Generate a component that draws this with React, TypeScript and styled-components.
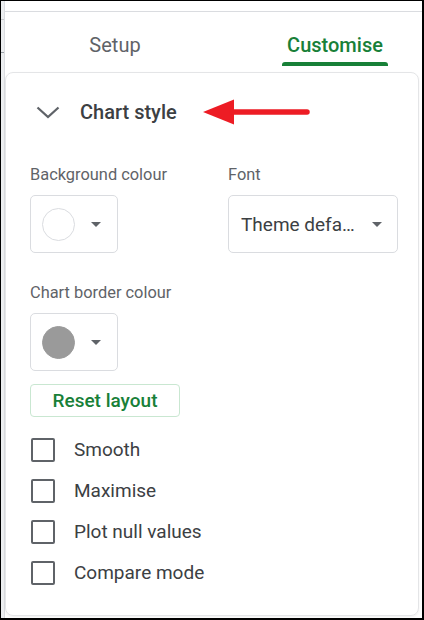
import styled, { createGlobalStyle } from "styled-components"

const GlobalStyle = createGlobalStyle`
    html, body {
        margin: 0;
        padding: 0;
        background: #ffffff;
    }
    body {
        font-family: Roboto, "Noto Sans", Arial, sans-serif;
    }
    * {
        box-sizing: border-box;
    }
`

const Frame = styled.div`
    width: 424px;
    height: 620px;
    display: flex;
    background: #ffffff;
    border-style: solid;
    border-color: #000000;
    border-width: 1px 2px 2px 1px;
    overflow: hidden;
`

const SheetEdge = styled.div`
    width: 4px;
    flex: none;
    background:
        linear-gradient(#c8cacd, #c8cacd) 0 18px / 100% 1px no-repeat,
        linear-gradient(#9aa0a6, #9aa0a6) 0 51px / 100% 1px no-repeat,
        #eceef0;
    border-right: 1px solid #dadce0;
`

const Main = styled.div`
    flex: 1;
    display: flex;
    flex-direction: column;
    min-width: 0;
`

const TopRule = styled.div`
    height: 11px;
    flex: none;
    border-bottom: 1px solid #dadce0;
`

const TabBar = styled.div`
    height: 54px;
    flex: none;
    display: flex;
    justify-content: space-between;
    padding: 0 34px 0 57px;
`

const Tab = styled.div<{ $active?: boolean }>`
    width: 106px;
    display: flex;
    flex-direction: column;
    align-items: center;
    justify-content: flex-end;
    font-size: 20px;
    line-height: 22px;
    font-weight: ${p => (p.$active ? 500 : 400)};
    color: ${p => (p.$active ? "#188038" : "#5f6368")};

    &::after {
        content: "";
        display: block;
        width: 100%;
        height: 4px;
        margin-top: 6px;
        border-radius: 3px 3px 0 0;
        background: ${p => (p.$active ? "#188038" : "transparent")};
    }
`

const Card = styled.div`
    flex: 1;
    margin: 6px 3px 2px 0;
    border: 1px solid #e4e5e7;
    border-radius: 8px;
    box-shadow: 0 1px 2px rgba(60, 64, 67, 0.08);
    padding: 15px 20px 0 24px;
    display: flex;
    flex-direction: column;
`

const Header = styled.div`
    height: 48px;
    display: flex;
    align-items: center;
    padding-left: 6px;
`

const Chevron = styled.svg`
    width: 24px;
    height: 24px;
    flex: none;
`

const HeaderTitle = styled.span`
    margin-left: 20px;
    font-size: 20px;
    font-weight: 500;
    color: #3c4043;
`

const Annotation = styled.svg`
    margin-left: 26px;
    width: 108px;
    height: 28px;
    flex: none;
`

const FieldGrid = styled.div`
    margin-top: 29px;
    display: grid;
    grid-template-columns: 198px 170px;
`

const Field = styled.div`
    display: flex;
    flex-direction: column;
    align-items: flex-start;
`

const Label = styled.div`
    font-size: 16.4px;
    line-height: 20px;
    color: #5f6368;
    margin-bottom: 10px;
`

const ColourButton = styled.div`
    width: 88px;
    height: 58px;
    border: 1px solid #dadce0;
    border-radius: 5px;
    display: flex;
    align-items: center;
    padding-left: 11px;
`

const Swatch = styled.div<{ $fill: string; $edge: string }>`
    width: 33px;
    height: 33px;
    border-radius: 50%;
    background: ${p => p.$fill};
    border: 1px solid ${p => p.$edge};
`

const Caret = styled.span<{ $gap: number }>`
    margin-left: ${p => p.$gap}px;
    width: 0;
    height: 0;
    border-left: 5px solid transparent;
    border-right: 5px solid transparent;
    border-top: 5px solid #5f6368;
`

const Select = styled.div`
    width: 170px;
    height: 58px;
    border: 1px solid #dadce0;
    border-radius: 5px;
    display: flex;
    align-items: center;
    justify-content: space-between;
    padding: 0 15px 0 12px;
    font-size: 19px;
    color: #3c4043;
`

const Section = styled.div`
    margin-top: 30px;
`

const ResetButton = styled.div`
    margin-top: 13px;
    width: 150px;
    height: 33px;
    border: 1px solid #c9e7d1;
    border-radius: 4px;
    display: flex;
    align-items: center;
    justify-content: center;
    font-size: 19px;
    font-weight: 500;
    color: #188038;
`

const CheckList = styled.div`
    margin-top: 12px;
    display: flex;
    flex-direction: column;
`

const CheckRow = styled.div`
    height: 41px;
    display: flex;
    align-items: center;
`

const CheckBox = styled.span`
    width: 24px;
    height: 24px;
    margin-left: 1px;
    border: 2px solid #5f6368;
    border-radius: 2px;
    flex: none;
`

const CheckLabel = styled.span`
    margin-left: 19px;
    font-size: 19px;
    color: #3c4043;
`

const options = ["Smooth", "Maximise", "Plot null values", "Compare mode"]

export default function App() {
    return (
        <>
            <GlobalStyle />
            <Frame>
                <SheetEdge />
                <Main>
                    <TopRule />
                    <TabBar>
                        <Tab>Setup</Tab>
                        <Tab $active>Customise</Tab>
                    </TabBar>
                    <Card>
                        <Header>
                            <Chevron viewBox="0 0 24 24" fill="none">
                                <path d="M1.5 7.5 L12 17 L22.5 7.5" stroke="#5f6368" strokeWidth="2.3" />
                            </Chevron>
                            <HeaderTitle>Chart style</HeaderTitle>
                            <Annotation viewBox="0 0 108 28">
                                <polygon points="0,14 31,1.5 31,26.5" fill="#ed1c24" />
                                <line x1="29" y1="14" x2="104" y2="14" stroke="#ed1c24" strokeWidth="5.5" strokeLinecap="round" />
                            </Annotation>
                        </Header>
                        <FieldGrid>
                            <Field>
                                <Label>Background colour</Label>
                                <ColourButton>
                                    <Swatch $fill="#ffffff" $edge="#dadce0" />
                                    <Caret $gap={16} />
                                </ColourButton>
                            </Field>
                            <Field>
                                <Label>Font</Label>
                                <Select>
                                    <span>Theme defa…</span>
                                    <Caret $gap={0} />
                                </Select>
                            </Field>
                        </FieldGrid>
                        <Section>
                            <Field>
                                <Label>Chart border colour</Label>
                                <ColourButton>
                                    <Swatch $fill="#9a9a9a" $edge="#9a9a9a" />
                                    <Caret $gap={16} />
                                </ColourButton>
                            </Field>
                        </Section>
                        <ResetButton>Reset layout</ResetButton>
                        <CheckList>
                            {options.map(o => (
                                <CheckRow key={o}>
                                    <CheckBox />
                                    <CheckLabel>{o}</CheckLabel>
                                </CheckRow>
                            ))}
                        </CheckList>
                    </Card>
                </Main>
            </Frame>
        </>
    )
}
